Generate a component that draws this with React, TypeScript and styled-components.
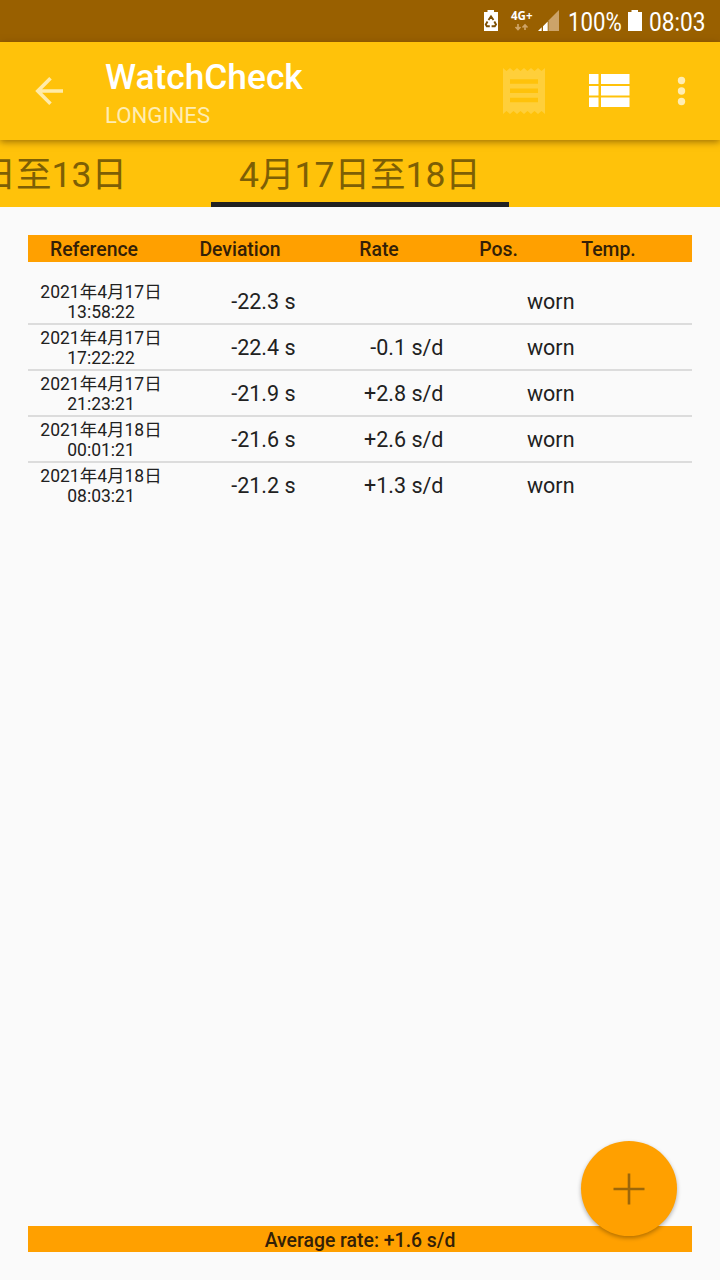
import React from "react";
import styled, { createGlobalStyle } from "styled-components";

const GlobalStyle = createGlobalStyle`
  * { box-sizing: border-box; }
  body {
    margin: 0;
    background: #fafafa;
    font-family: Roboto, "Noto Sans CJK SC", sans-serif;
    color: #212121;
  }
`;

const Screen = styled.div`
  width: 720px;
  height: 1280px;
  display: flex;
  flex-direction: column;
  overflow: hidden;
  background: #fafafa;
`;

const StatusBar = styled.div`
  height: 42px;
  flex: none;
  display: flex;
  justify-content: flex-end;
  padding-right: 14px;
  background: #996000;
  color: #fff;
`;

const StatusIcons = styled.svg`
  flex: none;
`;

const StatusText = styled.div<{ $width: number; $scale: number }>`
  width: ${(p) => p.$width}px;
  font-size: 25.5px;
  line-height: 44px;
  white-space: nowrap;
  transform: scaleX(${(p) => p.$scale});
  transform-origin: left center;
`;

const AppBar = styled.header`
  height: 98px;
  flex: none;
  display: flex;
  align-items: center;
  background: #ffc20a;
  box-shadow: 0 2px 7px rgba(80, 50, 0, 0.55);
  position: relative;
`;

const IconButton = styled.button<{ $width: number }>`
  width: ${(p) => p.$width}px;
  height: 98px;
  padding: 0;
  border: 0;
  background: none;
  svg { display: block; }
`;

const Titles = styled.div`
  flex: 1;
  height: 98px;
  padding: 15px 0 0 7px;
`;

const Title = styled.h1`
  margin: 0;
  font-size: 35.3px;
  font-weight: 500;
  line-height: 41px;
  color: #fff;
`;

const Subtitle = styled.div`
  font-size: 22.2px;
  line-height: 35px;
  color: #ffedb3;
`;

const Tabs = styled.nav`
  height: 67px;
  flex: none;
  display: flex;
  background: #ffc20a;
`;

const Tab = styled.div<{ $width: number; $active?: boolean }>`
  width: ${(p) => p.$width}px;
  display: flex;
  justify-content: ${(p) => (p.$active ? "center" : "flex-end")};
  padding-right: ${(p) => (p.$active ? 0 : 84)}px;
  overflow: hidden;
  border-bottom: 5px solid ${(p) => (p.$active ? "#212121" : "transparent")};
  font-size: 35.5px;
  line-height: 71px;
  white-space: nowrap;
  color: #7d5f05;
`;

const Content = styled.main`
  flex: 1;
  display: flex;
  flex-direction: column;
  padding: 28px 28px;
`;

const HeaderRow = styled.div`
  height: 27px;
  display: flex;
  background: #ffa000;
  font-size: 19.4px;
  font-weight: 500;
  line-height: 29px;
  color: #332007;
  margin-bottom: 17px;
`;

const HeaderCell = styled.div<{ $width: number }>`
  width: ${(p) => p.$width}px;
  text-align: center;
`;

const Row = styled.div`
  height: 46px;
  display: grid;
  grid-template-columns: 146px 121.5px 148px 131px;
  border-bottom: 2px solid #dcdcdc;
  font-size: 21.5px;
  line-height: 45px;
  white-space: pre;
  &:last-child { border-bottom: 0; }
`;

const Timestamp = styled.div`
  padding-top: 3px;
  font-size: 17.5px;
  line-height: 20px;
  text-align: center;
`;

const Value = styled.div`
  text-align: right;
`;

const Summary = styled.footer`
  height: 26px;
  margin-top: auto;
  background: #ffa000;
  font-size: 19.4px;
  font-weight: 500;
  line-height: 29px;
  text-align: center;
  color: #332007;
`;

const Fab = styled.button`
  position: absolute;
  left: 581px;
  top: 1141px;
  width: 96px;
  height: 95px;
  padding: 0;
  border: 0;
  border-radius: 50%;
  background: #ffa000;
  box-shadow: 0 2px 4px rgba(0, 0, 0, 0.3);
  svg { display: block; }
`;

const columns = [
  { label: "Reference", width: 132 },
  { label: "Deviation", width: 160 },
  { label: "Rate", width: 118 },
  { label: "Pos.", width: 121 },
  { label: "Temp.", width: 99 },
];

const readings = [
  { date: "2021年4月17日", time: "13:58:22", deviation: "-22.3 s", rate: "", position: "worn" },
  { date: "2021年4月17日", time: "17:22:22", deviation: "-22.4 s", rate: "-0.1 s/d", position: "worn" },
  { date: "2021年4月17日", time: "21:23:21", deviation: "-21.9 s", rate: "+2.8 s/d", position: "worn" },
  { date: "2021年4月18日", time: "00:01:21", deviation: "-21.6 s", rate: "+2.6 s/d", position: "worn" },
  { date: "2021年4月18日", time: "08:03:21", deviation: "-21.2 s", rate: "+1.3 s/d", position: "worn" },
];

const Label4G = styled.text`
  font: 700 11.5px "Open Sans", sans-serif;
`;

export default function App() {
  return (
    <>
      <GlobalStyle />
      <Screen>
        <StatusBar>
          <StatusIcons width="88" height="42" viewBox="480 0 88 42" fill="#fff">
            <path d="M484 12h3.500v-2h6.500v2h4v19h-14z" />
            <g fill="none" stroke="#7d4f05" strokeWidth="1.900">
              <path d="M488.500 20l2.500-3.500 2.500 3.500M494.300 21.500l1.700 3-1.200 1.700h-3.200M489.800 26.200h-3l-1-1.700 1.700-3" />
            </g>
            <Label4G x="511" y="20" textLength="21.500" lengthAdjust="spacingAndGlyphs">4G+</Label4G>
            <g fill="none" stroke="#cfa467" strokeWidth="1.700">
              <path d="M518 24v5M515.500 27l2.500 2.500 2.500-2.500M525 30v-5M522.500 27.500l2.500-2.500 2.500 2.500" />
            </g>
            <path d="M559 10v21h-10.500v-10.500z" fill="#cca369" />
            <path d="M541.700 27.300v3.700h-3.700zM547.700 21.500v9.500h-4.700v-4.700z" />
          </StatusIcons>
          <StatusText $width={60} $scale={0.87}>100%</StatusText>
          <StatusIcons width="21" height="42" viewBox="628 0 21 42" fill="#fff">
            <path d="M628 12h3.500v-2h6.500v2h4v19h-14z" />
          </StatusIcons>
          <StatusText $width={57} $scale={0.89}>08:03</StatusText>
        </StatusBar>
        <AppBar>
          <IconButton $width={98} aria-label="Back">
            <svg width="98" height="98" viewBox="0 42 98 98" fill="none" stroke="#ffebaa" strokeWidth="3.600">
              <path d="M63 91H38M50.500 78.300L37.800 91l12.700 12.700" />
            </svg>
          </IconButton>
          <Titles>
            <Title>WatchCheck</Title>
            <Subtitle>LONGINES</Subtitle>
          </Titles>
          <IconButton $width={84} aria-label="Log">
            <svg width="84" height="98" viewBox="482 42 84 98">
              <path
                fill="#ffcf3a"
                d="M503 68l3.500 3 3.500-3 3.500 3 3.500-3 3.500 3 3.500-3 3.500 3 3.500-3 3.500 3 3.500-3 3.500 3 3.500-3v46l-3.500-3-3.500 3-3.500-3-3.500 3-3.500-3-3.500 3-3.500-3-3.500 3-3.500-3-3.500 3-3.500-3-3.500 3z"
              />
              <path stroke="#ffc20a" strokeWidth="4.500" d="M510 81.500h28M510 90.700h28M510 100h28" />
            </svg>
          </IconButton>
          <IconButton $width={88} aria-label="List">
            <svg width="88" height="98" viewBox="566 42 88 98" fill="#fff">
              <path d="M589 74h9.500v10H589zM601 74h28.500v10H601zM589 86h9.500v9.500H589zM601 86h28.500v9.500H601zM589 97.500h9.500v9.500H589zM601 97.500h28.500v9.500H601z" />
            </svg>
          </IconButton>
          <IconButton $width={66} aria-label="More">
            <svg width="66" height="98" viewBox="654 42 66 98" fill="#ffedb3">
              <circle cx="681.500" cy="80.500" r="3.700" />
              <circle cx="681.500" cy="91" r="3.700" />
              <circle cx="681.500" cy="101.500" r="3.700" />
            </svg>
          </IconButton>
        </AppBar>
        <Tabs>
          <Tab $width={211}>日至13日</Tab>
          <Tab $width={298} $active>4月17日至18日</Tab>
        </Tabs>
        <Content>
          <HeaderRow>
            {columns.map((c) => (
              <HeaderCell key={c.label} $width={c.width}>{c.label}</HeaderCell>
            ))}
          </HeaderRow>
          <div>
            {readings.map((r) => (
              <Row key={r.time}>
                <Timestamp>{r.date + "\n" + r.time}</Timestamp>
                <Value>{r.deviation}</Value>
                <Value>{r.rate}</Value>
                <Value>{r.position}</Value>
              </Row>
            ))}
          </div>
          <Summary>Average rate: +1.6 s/d</Summary>
        </Content>
        <Fab aria-label="Add">
          <svg width="96" height="95" viewBox="581 1141 96 95" fill="none" stroke="#9c670a" strokeWidth="2.600">
            <path d="M613.500 1189h31M629 1173.500v31" />
          </svg>
        </Fab>
      </Screen>
    </>
  );
}
